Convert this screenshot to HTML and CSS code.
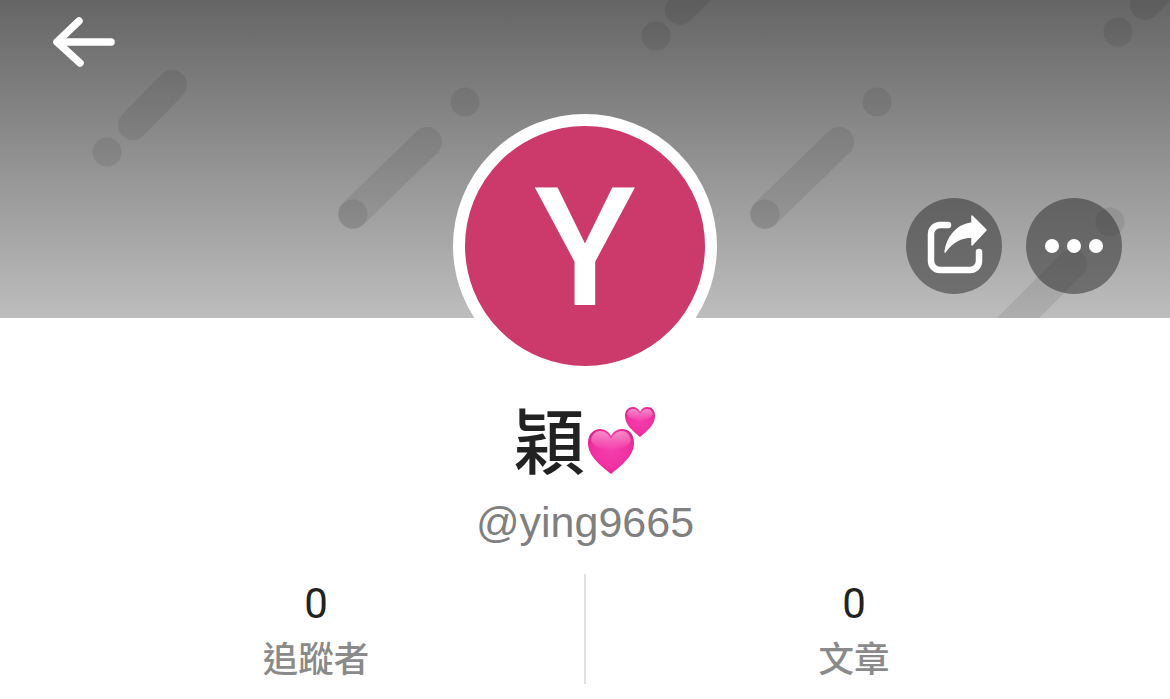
FILE: index.html
```html
<!DOCTYPE html>
<html lang="zh-Hant">

<head>
    <meta charset="UTF-8">
    <meta name="viewport" content="width=device-width, initial-scale=1.0">
    <title>穎 @ying9665</title>
    <link rel="stylesheet" href="styles.css">
</head>

<body>
    <header class="hero">
        <svg class="pattern" width="1170" height="318" viewBox="0 0 1170 318">
            <g class="pills">
                <line x1="172" y1="85" x2="133" y2="125" />
                <line x1="427" y1="142" x2="353" y2="214" />
                <line x1="839" y1="142" x2="765" y2="214" />
                <line x1="680" y1="10" x2="720" y2="-30" />
                <line x1="1145" y1="5" x2="1185" y2="-35" />
                <line x1="1072" y1="264" x2="1000" y2="336" />
            </g>
            <g class="dots">
                <circle cx="107" cy="152" r="14.5" />
                <circle cx="353" cy="214" r="14.5" />
                <circle cx="465" cy="102" r="14.5" />
                <circle cx="765" cy="214" r="14.5" />
                <circle cx="877" cy="102" r="14.5" />
                <circle cx="656" cy="36" r="14.5" />
                <circle cx="1118" cy="32" r="14.5" />
                <circle cx="1110" cy="222" r="14.5" />
            </g>
        </svg>
        <a class="back">
            <svg width="64" height="50" viewBox="0 0 64 50">
                <path d="M27 4 L5 25 L28 46 M5 25 H59" fill="none" stroke="#fff" stroke-width="7.5" stroke-linecap="round" stroke-linejoin="round" />
            </svg>
        </a>
        <div class="actions">
            <div class="round-btn">
                <svg width="96" height="96" viewBox="0 0 96 96">
                    <path d="M42 27 H34 a9 9 0 0 0 -9 9 V63 a9 9 0 0 0 9 9 H64 a9 9 0 0 0 9 -9 V54" fill="none" stroke="#fff" stroke-width="6.5" stroke-linecap="round" />
                    <path d="M80 32 L66 18 V25 C50 27 41 40 39 54 C46 44 54 39 66 39 V47 Z" fill="#fff" stroke="#fff" stroke-width="1.5" stroke-linejoin="round" />
                </svg>
            </div>
            <div class="round-btn">
                <svg width="96" height="96" viewBox="0 0 96 96">
                    <circle cx="26" cy="48" r="7" fill="#fff" />
                    <circle cx="48" cy="48" r="7" fill="#fff" />
                    <circle cx="70" cy="48" r="7" fill="#fff" />
                </svg>
            </div>
        </div>
    </header>

    <main class="profile">
        <div class="avatar">Y</div>
        <div class="name">
            <span>穎</span>
            <svg class="hearts" width="70" height="70" viewBox="0 0 70 70">
                <defs>
                    <radialGradient id="heart" cx="0.5" cy="0.45" r="0.62">
                        <stop offset="0" stop-color="#f53fae" />
                        <stop offset="0.7" stop-color="#f02f9f" />
                        <stop offset="1" stop-color="#cf1a80" />
                    </radialGradient>
                    <linearGradient id="shine" x1="0" y1="0" x2="0" y2="1">
                        <stop offset="0" stop-color="#fff" stop-opacity="0.45" />
                        <stop offset="1" stop-color="#fff" stop-opacity="0" />
                    </linearGradient>
                </defs>
                <path d="M53 31 C46 25 38 19 38 10 C38 4 42 1 46 1 C49 1 52 3 53 6 C54 3 57 1 60 1 C65 1 68 4 68 10 C68 19 60 25 53 31 Z" fill="url(#heart)" />
                <path d="M53 15 C47 14 41 12 40 8 C41 4 43 3 46 3 C49 3 52 5 53 8 C54 5 57 3 60 3 C63 3 65 4 66 8 C65 12 59 14 53 15 Z" fill="url(#shine)" />
                <path d="M24 68 C13 59 1 50 1 37 C1 28 7 23 13 23 C18 23 22 26 24 30 C26 26 30 23 35 23 C42 23 47 28 47 37 C47 50 35 59 24 68 Z" fill="url(#heart)" />
                <path d="M24 44 C15 43 6 41 4 34 C5 28 9 25 13 25 C18 25 22 28 24 33 C26 28 30 25 35 25 C39 25 43 28 44 34 C42 41 33 43 24 44 Z" fill="url(#shine)" />
            </svg>
        </div>
        <div class="handle">@ying9665</div>
        <section class="stats">
            <div class="stat">
                <div class="stat-num">0</div>
                <div class="stat-label">追蹤者</div>
            </div>
            <div class="stat-line"></div>
            <div class="stat">
                <div class="stat-num">0</div>
                <div class="stat-label">文章</div>
            </div>
        </section>
    </main>
</body>

</html>
```

FILE: styles.css
```css
body {
    margin: 0;
    background: #fff;
    font-family: Roboto, "Noto Sans CJK TC", sans-serif;
    overflow: hidden;
}

.hero {
    position: relative;
    height: 318px;
    box-sizing: border-box;
    padding: 17px 48px 24px 52px;
    display: flex;
    flex-direction: column;
    overflow: hidden;
    background: linear-gradient(#656565, #bdbdbd);
}

.pattern {
    position: absolute;
    top: 0;
    left: 0;
}

.pills line {
    stroke: rgba(0, 0, 0, 0.08);
    stroke-width: 30;
    stroke-linecap: round;
}

.dots circle {
    fill: rgba(0, 0, 0, 0.08);
}

.back {
    position: relative;
    display: block;
    width: 64px;
    height: 50px;
}

.actions {
    position: relative;
    z-index: 2;
    margin-top: auto;
    align-self: flex-end;
    display: flex;
    gap: 24px;
}

.round-btn {
    width: 96px;
    height: 96px;
    border-radius: 50%;
    background: rgba(40, 40, 40, 0.5);
}

.round-btn svg {
    display: block;
}

.profile {
    display: flex;
    flex-direction: column;
    align-items: center;
}

.avatar {
    position: relative;
    z-index: 1;
    width: 240px;
    height: 240px;
    margin-top: -204px;
    border: 12px solid #fff;
    border-radius: 50%;
    background: #cb3a6b;
    color: #fff;
    font-size: 166px;
    font-weight: 500;
    line-height: 246px;
    text-align: center;
}

.name {
    display: flex;
    align-items: center;
    gap: 2px;
    height: 100px;
    margin-top: 9px;
    color: #222;
    font-family: "Noto Sans CJK TC", sans-serif;
    font-size: 71px;
    font-weight: 500;
    line-height: 100px;
}

.hearts {
    margin-top: 8px;
}

.handle {
    height: 48px;
    margin-top: 11px;
    color: #808080;
    font-family: "Liberation Sans", sans-serif;
    font-size: 43px;
    line-height: 48px;
}

.stats {
    align-self: stretch;
    display: grid;
    grid-template-columns: 1fr 2px 1fr;
    margin-top: 28px;
    padding: 0 48px;
}

.stat {
    height: 110px;
    text-align: center;
}

.stat-line {
    background: #e2e2e2;
}

.stat-num {
    height: 56px;
    padding-top: 2px;
    color: #222;
    font-size: 42px;
    line-height: 56px;
}

.stat-label {
    color: #8a8a8a;
    font-family: "Noto Sans CJK TC", sans-serif;
    font-size: 35.5px;
    font-weight: 500;
    line-height: 50px;
}
```
